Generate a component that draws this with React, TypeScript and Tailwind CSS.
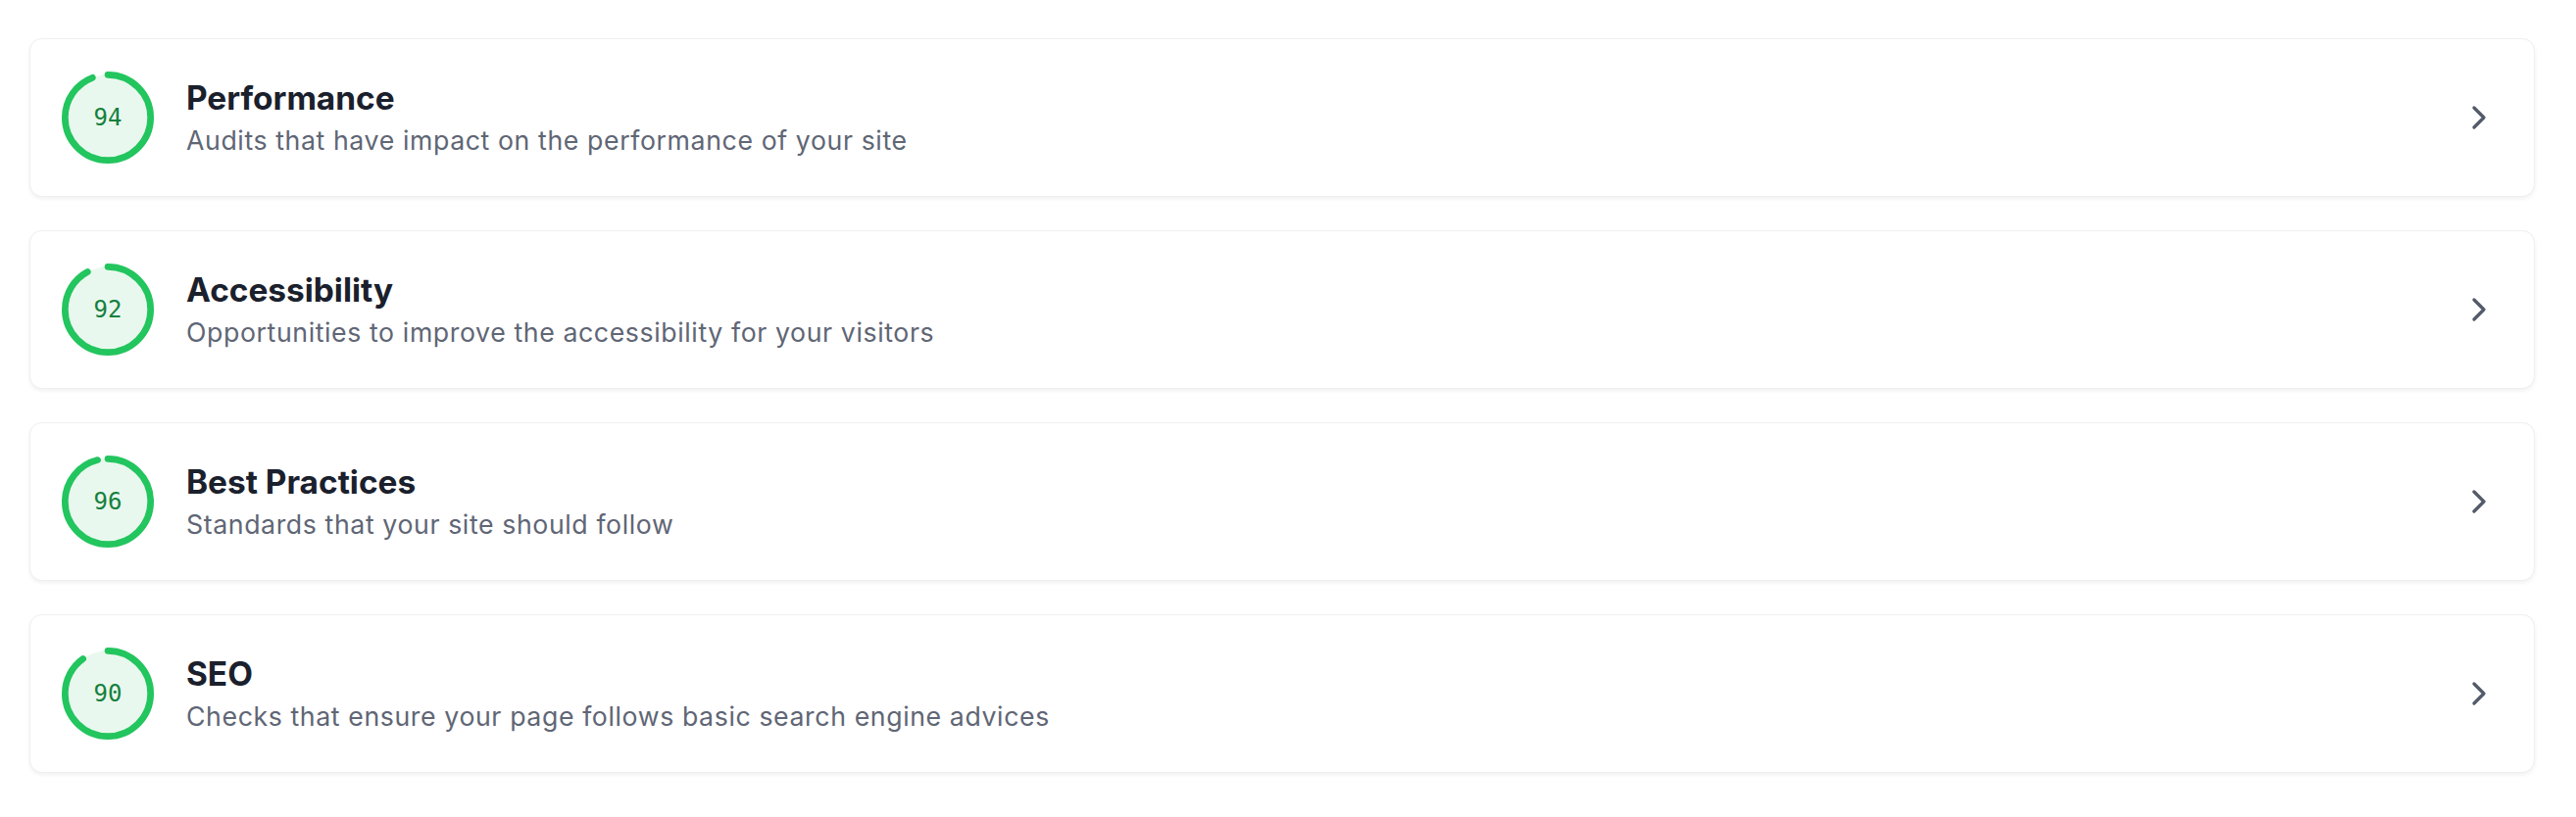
import { ChevronRight } from 'lucide-react';

const categories = [
  {
    score: 94,
    title: 'Performance',
    description: 'Audits that have impact on the performance of your site'
  },
  {
    score: 92,
    title: 'Accessibility',
    description: 'Opportunities to improve the accessibility for your visitors'
  },
  {
    score: 96,
    title: 'Best Practices',
    description: 'Standards that your site should follow'
  },
  {
    score: 90,
    title: 'SEO',
    description: 'Checks that ensure your page follows basic search engine advices'
  }
];

function ScoreRing({ score }: { score: number }) {
  const size = 94;
  const stroke = 6.7;
  const r = (size - stroke) / 2;
  const c = 2 * Math.PI * r;

  return (
    <div className="relative flex h-[94px] w-[94px] shrink-0 items-center justify-center">
      <svg width={size} height={size} className="absolute inset-0 -rotate-90">
        <circle cx={size / 2} cy={size / 2} r={r} fill="#e9f8ee" />
        <circle
          cx={size / 2}
          cy={size / 2}
          r={r}
          fill="none"
          stroke="#22c55e"
          strokeWidth={stroke}
          strokeLinecap="round"
          strokeDasharray={`${(score / 100) * c} ${c}`}
        />
      </svg>
      <span className="relative font-['DejaVu_Sans_Mono',monospace] text-[24px] leading-none text-[#15803d]">
        {score}
      </span>
    </div>
  );
}

export default function App() {
  return (
    <div className="min-h-screen bg-white pl-[30px] pr-[42px] pt-[39px] pb-[45px]">
      <div className="flex flex-col gap-[34px]">
        {categories.map((cat) => (
          <div
            key={cat.title}
            className="flex h-[162px] items-center gap-[33px] rounded-[13px] border border-[#efefef] bg-white pl-[32px] pr-[36px] shadow-[0_2px_4px_rgba(0,0,0,0.06)]"
          >
            <ScoreRing score={cat.score} />
            <div className="flex-1 font-['Inter',sans-serif]">
              <h3 className="text-[33.4px] font-bold leading-[46.7px] text-[#1a202c]">
                {cat.title}
              </h3>
              <p className="text-[26.7px] leading-[40px] tracking-[0.6px] text-[#5f6675]">
                {cat.description}
              </p>
            </div>
            <ChevronRight className="h-[40px] w-[40px] text-[#535b69]" strokeWidth={2} />
          </div>
        ))}
      </div>
    </div>
  );
}
